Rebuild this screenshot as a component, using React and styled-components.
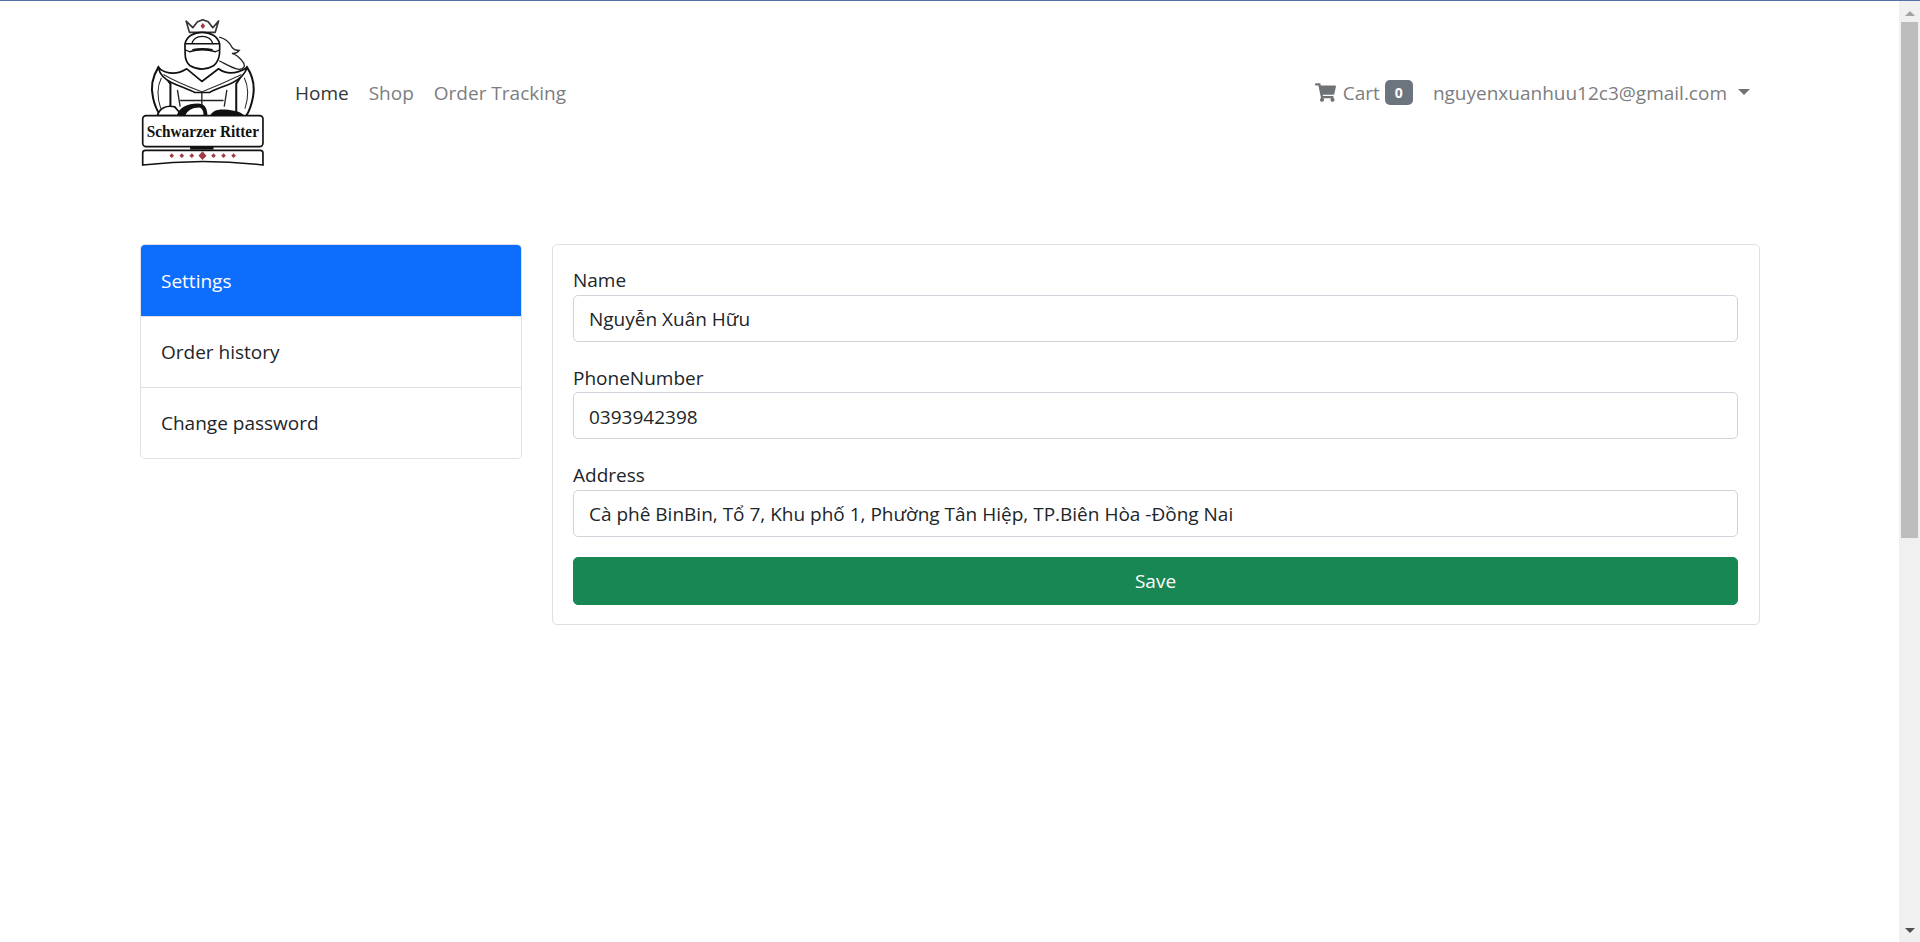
import styled, { createGlobalStyle } from "styled-components";

const GlobalStyle = createGlobalStyle`
  html, body {
    margin: 0;
    padding: 0;
    background: #fff;
    overflow: hidden;
  }
  * {
    box-sizing: border-box;
  }
  body {
    font-family: "Open Sans", "Noto Sans", sans-serif;
    font-size: 19px;
    color: #212529;
  }
`;

const NAV_LINKS = [
  { label: "Home", active: true },
  { label: "Shop" },
  { label: "Order Tracking" },
];

const SIDE_ITEMS = [
  { label: "Settings", active: true },
  { label: "Order history" },
  { label: "Change password" },
];

const FIELDS = [
  { label: "Name", value: "Nguyễn Xuân Hữu" },
  { label: "PhoneNumber", value: "0393942398" },
  {
    label: "Address",
    value: "Cà phê BinBin, Tổ 7, Khu phố 1, Phường Tân Hiệp, TP.Biên Hòa -Đồng Nai",
  },
];

const Logo = () => (
  <LogoSvg viewBox="60 50 380 455" aria-label="Schwarzer Ritter">
    {/* plume */}
    <path d="M297 110c18 4 30 14 38 30 5 8 14 10 22 10-6 8-14 10-22 9 14 4 26 14 36 30 4 10-2 18-14 18-18-2-36-14-60-26" fill="#fff" stroke="#222" strokeWidth="4" />
    {/* crown */}
    <path d="M198 62l20 20 14-18 16-6 16 6 14 18 17-20-10 34h-77z" fill="#fff" stroke="#333" strokeWidth="5" strokeLinejoin="round" />
    <path d="M248 68l7 9-7 9-7-9z" fill="#a33a45" />
    {/* pauldrons and side shields */}
    <path d="M115 200c-16 26-24 60-16 92 4 20 12 38 22 54h30V250z" fill="#fff" stroke="#111" strokeWidth="6" />
    <path d="M380 200c16 24 24 58 18 90-4 22-10 40-20 56h-30V250z" fill="#fff" stroke="#111" strokeWidth="6" />
    <path d="M124 232c-12 24-14 56-2 92M372 232c12 24 14 56 2 92" fill="none" stroke="#222" strokeWidth="3" />
    {/* collar */}
    <path d="M115 203c20 14 50 24 85 2l45 38 50-38c30 22 60 12 85-3-6 20-22 34-42 44-30 14-58 22-70 30h-44c-14-8-44-18-70-30-20-10-34-22-39-43z" fill="#fff" stroke="#111" strokeWidth="5" strokeLinejoin="round" />
    <path d="M130 222c30 18 68 34 115 52 44-18 84-34 118-52" fill="none" stroke="#333" strokeWidth="3" />
    {/* chest */}
    <path d="M172 268l8 50M320 268l-8 50M245 274v40M180 300h130" fill="none" stroke="#222" strokeWidth="4" />
    <path d="M112 345c6-22 26-32 52-26l22 26z" fill="#fff" stroke="#111" strokeWidth="5" />
    <path d="M170 345c6-24 32-36 62-36 22 0 28 12 30 36z" fill="#111" />
    <path d="M196 345c4-14 20-24 42-24 10 4 12 14 12 24z" fill="#fff" />
    <path d="M270 345c6-14 22-20 44-18 26 2 48 6 58 18z" fill="#111" />
    {/* helmet */}
    <path d="M195 130c4-22 26-34 51-34s47 12 52 34v30c-2 16-8 28-18 36-10 6-22 10-34 10s-26-4-36-10c-10-8-15-20-15-36z" fill="#fff" stroke="#111" strokeWidth="5" />
    <path d="M215 130c4-14 16-22 31-22s28 8 32 22" fill="none" stroke="#111" strokeWidth="4" />
    <path d="M195 130h103v18l-12 6c-26-8-52-8-78 0l-13-6z" fill="#fff" stroke="#111" strokeWidth="4" strokeLinejoin="round" />
    <path d="M216 146c20-4 42-4 62 0l-2 5c-18-3-38-3-58 0z" fill="#111" />
    {/* name banner */}
    <rect x="68" y="345" width="360" height="93" rx="10" fill="#fff" stroke="#111" strokeWidth="5" />
    <BannerText x="80" y="408" textLength="336" lengthAdjust="spacingAndGlyphs">Schwarzer Ritter</BannerText>
    <path d="M210 439h70v8h-70z" fill="#111" />
    <path d="M76 449h344c5 0 8 3 8 8v36c-120-14-240-14-360 0v-36c0-5 3-8 8-8z" fill="#fff" stroke="#111" strokeWidth="5" />
    {[155, 185, 215, 280, 310, 340].map((x) => (
      <path key={x} d={`M${x} 458l7 7-7 7-7-7z`} fill="#a33a45" />
    ))}
    <path d="M247 452l12 13-12 13-12-13z" fill="#a33a45" />
  </LogoSvg>
);

const CartIcon = () => (
  <svg width="21" height="19" viewBox="0 0 576 512" fill="#6f7276">
    <path d="M528.12 301.319l47.273-208C578.806 78.301 567.391 64 551.99 64H159.208l-9.166-44.81C147.758 8.021 137.93 0 126.529 0H24C10.745 0 0 10.745 0 24v16c0 13.255 10.745 24 24 24h69.883l70.248 343.435C147.325 417.1 136 435.222 136 456c0 30.928 25.072 56 56 56s56-25.072 56-56c0-15.674-6.447-29.835-16.824-40h209.647C430.447 426.165 424 440.326 424 456c0 30.928 25.072 56 56 56s56-25.072 56-56c0-22.172-12.888-41.332-31.579-50.405l5.517-24.276c3.413-15.018-8.002-29.319-23.403-29.319H218.117l-6.545-32h293.145c11.206 0 20.92-7.754 23.403-18.681z" />
  </svg>
);

const App = () => {
  return (
    <>
      <GlobalStyle />
      <Screen>
        <Page>
          <Navbar>
            <Logo />
            <NavLinks>
              {NAV_LINKS.map((link) => (
                <NavLink key={link.label} $active={link.active} href="#">
                  {link.label}
                </NavLink>
              ))}
            </NavLinks>
            <NavRight>
              <CartLink href="#">
                <CartIcon />
                Cart
                <Badge>0</Badge>
              </CartLink>
              <UserLink href="#">
                nguyenxuanhuu12c3@gmail.com
                <Caret />
              </UserLink>
            </NavRight>
          </Navbar>
          <Content>
            <SideList>
              {SIDE_ITEMS.map((item) => (
                <SideItem key={item.label} $active={item.active} href="#">
                  {item.label}
                </SideItem>
              ))}
            </SideList>
            <FormCard>
              {FIELDS.map((field) => (
                <Field key={field.label}>
                  <Label>{field.label}</Label>
                  <Input defaultValue={field.value} />
                </Field>
              ))}
              <SaveButton type="button">Save</SaveButton>
            </FormCard>
          </Content>
        </Page>
        <Scrollbar>
          <ArrowUp />
          <ThumbTrack>
            <Thumb />
          </ThumbTrack>
          <ArrowDown />
        </Scrollbar>
      </Screen>
    </>
  );
};

const Screen = styled.div`
  display: flex;
  height: 942px;
  border-top: 1px solid #5470a8;
`;
const Page = styled.main`
  flex: 1 0;
  min-width: 0;
`;
const Navbar = styled.nav`
  display: flex;
  align-items: center;
  height: 187px;
  padding: 15px 22px 19px 140px;
`;
const LogoSvg = styled.svg`
  width: 127px;
  height: 152px;
  flex: none;
`;
const BannerText = styled.text`
  font-family: "Liberation Serif", serif;
  font-weight: 700;
  font-size: 48px;
  fill: #111;
`;
const NavLinks = styled.div`
  display: flex;
  margin-left: 18px;
`;
const NavLink = styled.a`
  padding: 8px 10px;
  line-height: 24px;
  text-decoration: none;
  color: ${(props) => (props.$active ? "#343638" : "#7c7d7f")};
`;
const NavRight = styled.div`
  display: flex;
  align-items: center;
  margin-left: auto;
  margin-right: 119px;
`;
const CartLink = styled.a`
  display: flex;
  align-items: center;
  gap: 7px;
  padding: 8px;
  line-height: 24px;
  color: #7c7d7f;
  text-decoration: none;
`;
const Badge = styled.span`
  display: inline-block;
  margin-left: -2px;
  padding: 5.5px 10px;
  border-radius: 5px;
  background: #6c757d;
  color: #fff;
  font-size: 14px;
  font-weight: 700;
  line-height: 1;
`;
const UserLink = styled.a`
  display: flex;
  align-items: center;
  margin-left: 4px;
  padding: 8px;
  line-height: 24px;
  color: #7c7d7f;
  text-decoration: none;
`;
const Caret = styled.span`
  width: 0;
  height: 0;
  margin-left: 11px;
  margin-top: -2px;
  border-top: 6px solid #6f7276;
  border-left: 6px solid transparent;
  border-right: 6px solid transparent;
`;
const Content = styled.div`
  display: flex;
  align-items: flex-start;
  gap: 30px;
  padding: 56px 0 0 140px;
`;
const SideList = styled.div`
  display: flex;
  flex-direction: column;
  width: 382px;
  flex: none;
  border: 1px solid #dfe0e1;
  border-radius: 5px;
  overflow: hidden;
`;
const SideItem = styled.a`
  display: block;
  height: ${(props) => (props.$active ? "72px" : "71px")};
  margin: ${(props) => (props.$active ? "-1px -1px 0" : "0")};
  padding: 0 ${(props) => (props.$active ? "21px" : "20px")};
  line-height: ${(props) => (props.$active ? "75px" : "71px")};
  text-decoration: none;
  color: ${(props) => (props.$active ? "#fff" : "#212529")};
  background: ${(props) => (props.$active ? "#0d6efd" : "#fff")};
  & + & {
    border-top: 1px solid #dfe0e1;
  }
`;
const FormCard = styled.form`
  width: 1208px;
  flex: none;
  padding: 20px 21px 19.5px 20px;
  border: 1px solid #dfe0e1;
  border-radius: 5px;
`;
const Field = styled.div`
  margin-bottom: 20.8px;
`;
const Label = styled.label`
  display: block;
  padding-top: 1px;
  line-height: 28.8px;
`;
const Input = styled.input`
  display: block;
  width: 100%;
  height: 47px;
  padding: 2px 15px 0;
  border: 1px solid #ced4da;
  border-radius: 5px;
  font: inherit;
  color: #212529;
  outline: none;
`;
const SaveButton = styled.button`
  display: block;
  width: 100%;
  height: 48px;
  margin-top: -1px;
  border: 1px solid #198754;
  border-radius: 5px;
  background: #198754;
  color: #fff;
  font: inherit;
`;
const Scrollbar = styled.aside`
  display: flex;
  flex-direction: column;
  align-items: center;
  width: 21px;
  flex: none;
  background: #f0f0f0;
`;
const ArrowUp = styled.div`
  width: 0;
  height: 0;
  margin: 10px 0 6px;
  border-bottom: 5px solid #a3a3a3;
  border-left: 5px solid transparent;
  border-right: 5px solid transparent;
`;
const ArrowDown = styled.div`
  width: 0;
  height: 0;
  margin: 5px 0 9px;
  border-top: 5px solid #505050;
  border-left: 5px solid transparent;
  border-right: 5px solid transparent;
`;
const ThumbTrack = styled.div`
  flex: 1 0;
  width: 100%;
`;
const Thumb = styled.div`
  height: 516px;
  margin: 0 2px;
  background: #bdbdbd;
`;

export default App;
